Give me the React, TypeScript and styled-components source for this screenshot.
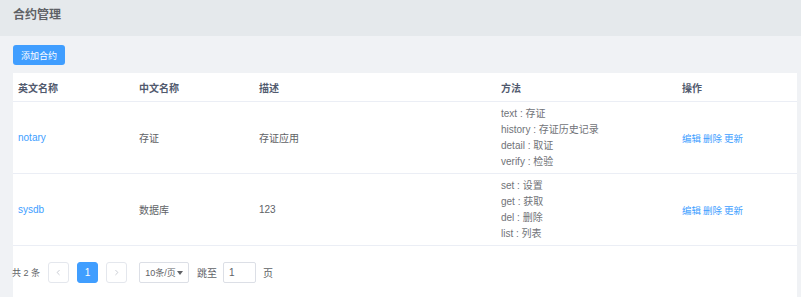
import styled, { createGlobalStyle } from "styled-components";

const GlobalStyle = createGlobalStyle`
  html, body {
    margin: 0;
    padding: 0;
    background: #f0f2f5;
    font-family: "Liberation Sans", "Noto Sans CJK SC", sans-serif;
    font-size: 10px;
    color: #606266;
  }
`;

const Page = styled.div`
  width: 801px;
  height: 297px;
  overflow: hidden;
  background: #f0f2f5;
`;

const TitleBar = styled.div`
  height: 36px;
  background: #e5e9ec;
  display: flex;
  align-items: center;
  padding-left: 13px;
  padding-bottom: 10px;
  box-sizing: border-box;
  font-size: 12px;
  font-weight: bold;
  color: #5e6166;
`;

const Body = styled.div`
  padding: 9px 4px 0 13px;
`;

const AddButton = styled.button`
  height: 20px;
  width: 52px;
  padding: 0;
  border: none;
  border-radius: 3px;
  background: #409eff;
  color: #fff;
  font-family: inherit;
  font-size: 9px;
  cursor: pointer;
`;

const Card = styled.div`
  margin-top: 8px;
  background: #fff;
  height: 230px;
`;

const Table = styled.table`
  width: 100%;
  border-collapse: collapse;
  table-layout: fixed;
`;

const Th = styled.th`
  height: 28px;
  padding: 0 5px;
  text-align: left;
  font-weight: bold;
  color: #515a6e;
  border-bottom: 1px solid #ebeef5;
`;

const Td = styled.td`
  height: 71px;
  padding: 0 5px;
  border-bottom: 1px solid #ebeef5;
  color: #606266;
  vertical-align: middle;
`;

const Link = styled.span`
  color: #409eff;
  cursor: pointer;
`;

const Methods = styled.div`
  line-height: 16px;
  color: #717378;
`;

const Actions = styled.div`
  display: flex;
  gap: 2px;
  font-size: 9.5px;
  color: #409eff;
`;

const Pager = styled.div`
  display: flex;
  align-items: center;
  padding-top: 16px;
  margin-left: -1px;
  color: #606266;
`;

const Total = styled.span`
  font-size: 9px;
  margin-right: 8px;
`;

const PageBtn = styled.button<{ $active?: boolean }>`
  width: 21px;
  height: 21px;
  margin-right: 8px;
  padding: 0;
  border: 1px solid ${(p) => (p.$active ? "#409eff" : "#e4e7ed")};
  border-radius: 3px;
  background: ${(p) => (p.$active ? "#409eff" : "#fff")};
  color: ${(p) => (p.$active ? "#fff" : "#c0c4cc")};
  font-family: inherit;
  font-size: 10px;
  display: flex;
  align-items: center;
  justify-content: center;
`;

const SizeSelect = styled.div`
  width: 50px;
  height: 21px;
  box-sizing: border-box;
  margin-left: 4px;
  border: 1px solid #dcdfe6;
  border-radius: 2px;
  display: flex;
  align-items: center;
  justify-content: center;
  font-size: 9px;
  gap: 1px;
`;

const Caret = styled.span`
  width: 0;
  height: 0;
  border-left: 3.5px solid transparent;
  border-right: 3.5px solid transparent;
  border-top: 4px solid #606266;
`;

const JumpLabel = styled.span`
  margin: 0 6px 0 8px;
`;

const JumpInput = styled.div`
  width: 33px;
  height: 21px;
  box-sizing: border-box;
  border: 1px solid #dcdfe6;
  border-radius: 2px;
  display: flex;
  align-items: center;
  padding-left: 5px;
  margin-right: 7px;
`;

const rows = [
  {
    en: "notary",
    cn: "存证",
    desc: "存证应用",
    methods: ["text : 存证", "history : 存证历史记录", "detail : 取证", "verify : 检验"],
  },
  {
    en: "sysdb",
    cn: "数据库",
    desc: "123",
    methods: ["set : 设置", "get : 获取", "del : 删除", "list : 列表"],
  },
];

const Chevron = ({ dir }: { dir: "left" | "right" }) => (
  <svg width="7" height="7" viewBox="0 0 10 10" fill="none" stroke="#c0c4cc" strokeWidth="1.2">
    <path d={dir === "left" ? "M6.5 1.5 L3 5 L6.5 8.5" : "M3.5 1.5 L7 5 L3.5 8.5"} />
  </svg>
);

export default function App() {
  return (
    <Page>
      <GlobalStyle />
      <TitleBar>合约管理</TitleBar>
      <Body>
        <AddButton>添加合约</AddButton>
        <Card>
          <Table>
            <colgroup>
              <col style={{ width: 121 }} />
              <col style={{ width: 120 }} />
              <col style={{ width: 242 }} />
              <col style={{ width: 181 }} />
              <col />
            </colgroup>
            <thead>
              <tr>
                <Th>英文名称</Th>
                <Th>中文名称</Th>
                <Th>描述</Th>
                <Th>方法</Th>
                <Th>操作</Th>
              </tr>
            </thead>
            <tbody>
              {rows.map((r) => (
                <tr key={r.en}>
                  <Td>
                    <Link>{r.en}</Link>
                  </Td>
                  <Td>{r.cn}</Td>
                  <Td>{r.desc}</Td>
                  <Td>
                    <Methods>
                      {r.methods.map((m) => (
                        <div key={m}>{m}</div>
                      ))}
                    </Methods>
                  </Td>
                  <Td>
                    <Actions>
                      <span>编辑</span>
                      <span>删除</span>
                      <span>更新</span>
                    </Actions>
                  </Td>
                </tr>
              ))}
            </tbody>
          </Table>
          <Pager>
            <Total>共 2 条</Total>
            <PageBtn>
              <Chevron dir="left" />
            </PageBtn>
            <PageBtn $active>1</PageBtn>
            <PageBtn>
              <Chevron dir="right" />
            </PageBtn>
            <SizeSelect>
              10条/页 <Caret />
            </SizeSelect>
            <JumpLabel>跳至</JumpLabel>
            <JumpInput>1</JumpInput>
            <span>页</span>
          </Pager>
        </Card>
      </Body>
    </Page>
  );
}
